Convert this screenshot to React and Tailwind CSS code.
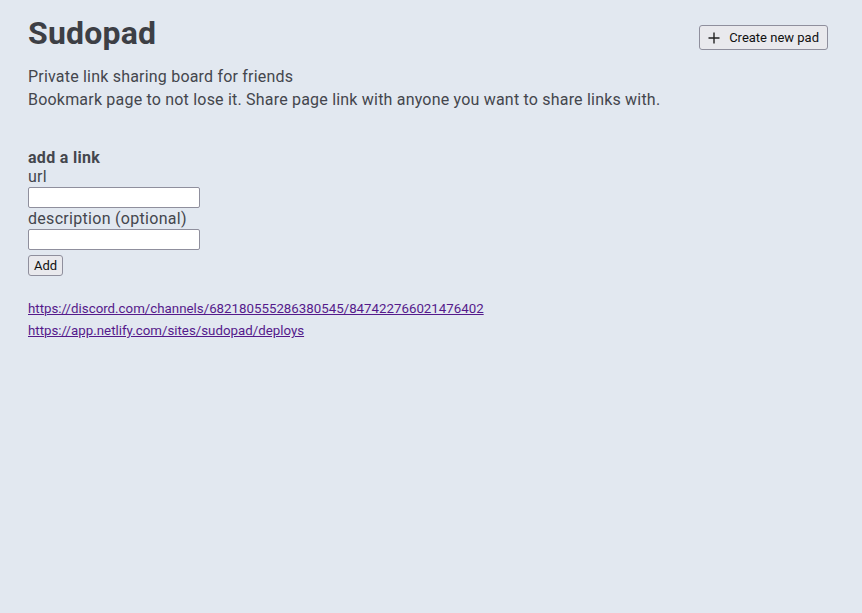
import React from 'react'

// Sudopad landing page: title, intro text, add-link form and link list
const links = [
  'https://discord.com/channels/682180555286380545/847422766021476402',
  'https://app.netlify.com/sites/sudopad/deploys',
]

function PlusIcon() {
  return (
    <svg width="12" height="12" viewBox="0 0 12 12" className="mr-[9px]">
      <path d="M6 0.5v11M0.5 6h11" stroke="#222" strokeWidth="1.4" fill="none" />
    </svg>
  )
}

export default function App() {
  return (
    <div
      className="min-h-[613px] bg-[#e2e8f0] text-[#44464d] pl-[28px] pr-[34px] pt-[14px]"
      style={{ fontFamily: 'Roboto, "Liberation Sans", sans-serif' }}
    >
      <div className="flex items-start justify-between">
        <h1 className="text-[32px] font-bold leading-[38px] text-[#3d3f45] tracking-[0.2px]">Sudopad</h1>
        <button className="mt-[11px] flex items-center h-[25px] px-[8px] text-[13px] text-[#111] bg-[#e9e9ed] border border-[#8f8f9d] rounded-[3px]">
          <PlusIcon />
          Create new pad
        </button>
      </div>

      <div className="mt-[13px] text-[16px] leading-[23px] tracking-[0.2px]">
        <p>Private link sharing board for friends</p>
        <p>Bookmark page to not lose it. Share page link with anyone you want to share links with.</p>
      </div>

      {/* add link form */}
      <form className="mt-[37px] flex flex-col items-start text-[16px] leading-[19px] tracking-[0.3px]">
        <h3 className="font-bold">add a link</h3>
        <label>url</label>
        <input className="mt-[1px] w-[172px] h-[21px] bg-white border border-[#8f8f9d] rounded-[2px]" />
        <label className="mt-[1px]">description (optional)</label>
        <input className="mt-[1px] w-[172px] h-[21px] bg-white border border-[#8f8f9d] rounded-[2px]" />
        <button
          type="button"
          className="mt-[5px] h-[21px] px-[5px] text-[13px] tracking-normal text-[#111] bg-[#e9e9ed] border border-[#8f8f9d] rounded-[3px]"
        >
          Add
        </button>
      </form>

      <div className="mt-[22px] flex flex-col text-[13.3px] leading-[22px]">
        {links.map((url) => (
          <a key={url} href={url} className="text-[#551a8b] underline self-start">
            {url}
          </a>
        ))}
      </div>
    </div>
  )
}
